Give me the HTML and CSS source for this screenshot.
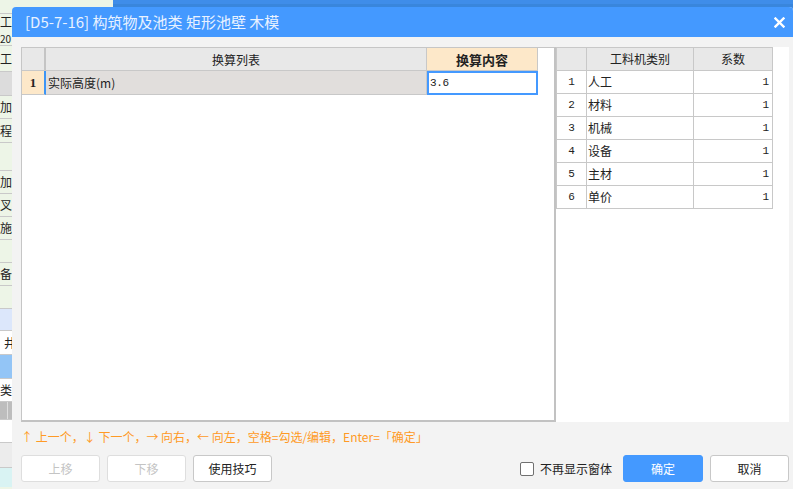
FILE: index.html
```html
<!DOCTYPE html>
<html lang="zh">
<head>
<meta charset="utf-8">
<link rel="stylesheet" href="styles.css">
</head>
<body>
<div class="desk">
  <div class="side">
    <div class="srow h14"></div>
    <div class="srow h34 two"><span>工</span><span class="small">20</span></div>
    <div class="srow h26"><span>工</span></div>
    <div class="srow h24 gray"></div>
    <div class="srow h23"><span>加</span></div>
    <div class="srow h24"><span>程</span></div>
    <div class="srow h28"></div>
    <div class="srow h23"><span>加</span></div>
    <div class="srow h23"><span>叉</span></div>
    <div class="srow h23"><span>施</span></div>
    <div class="srow h23"></div>
    <div class="srow h23"><span>备</span></div>
    <div class="srow h23"></div>
    <div class="srow h22 lblue"></div>
    <div class="srow h24 white"><span class="ind">井</span></div>
    <div class="srow h24 mblue"></div>
    <div class="srow h23 white"><span>类</span></div>
    <div class="srow h18 scroll"></div>
    <div class="srow h23 white"></div>
    <div class="srow h25 lgray"></div>
    <div class="srow h19 cyan"></div>
  </div>
  <div class="topband"></div>
</div>

<div class="dialog">
  <div class="titlebar">
    <span class="title">[D5-7-16] 构筑物及池类 矩形池壁 木模</span>
    <svg class="close" width="11" height="11" viewBox="0 0 11 11"><path d="M1.5 1.5 L9.5 9.5 M9.5 1.5 L1.5 9.5" stroke="#fff" stroke-width="2.4" stroke-linecap="square"/></svg>
  </div>
  <div class="dbody">
    <div class="panes">
      <div class="lpane">
        <div class="lrow lhead">
          <div class="c-num"></div>
          <div class="c-name">换算列表</div>
          <div class="c-val">换算内容</div>
        </div>
        <div class="lrow lsel">
          <div class="c-num">1</div>
          <div class="c-name">实际高度(m)</div>
          <div class="c-val"><span class="mono">3.6</span></div>
        </div>
      </div>
      <div class="rpane">
        <table class="rt">
          <thead>
            <tr><th class="n"></th><th class="k">工料机类别</th><th class="x">系数</th></tr>
          </thead>
          <tbody>
            <tr><td class="n">1</td><td class="k">人工</td><td class="x">1</td></tr>
            <tr><td class="n">2</td><td class="k">材料</td><td class="x">1</td></tr>
            <tr><td class="n">3</td><td class="k">机械</td><td class="x">1</td></tr>
            <tr><td class="n">4</td><td class="k">设备</td><td class="x">1</td></tr>
            <tr><td class="n">5</td><td class="k">主材</td><td class="x">1</td></tr>
            <tr><td class="n">6</td><td class="k">单价</td><td class="x">1</td></tr>
          </tbody>
        </table>
      </div>
    </div>
    <div class="hint">↑ 上一个，↓ 下一个，→ 向右，← 向左，空格=勾选/编辑，Enter=「确定」</div>
    <div class="actions">
      <div class="group">
        <button class="btn disabled">上移</button>
        <button class="btn disabled">下移</button>
        <button class="btn">使用技巧</button>
      </div>
      <div class="group right">
        <label class="check"><span class="box"></span><span class="ctext">不再显示窗体</span></label>
        <button class="btn primary">确定</button>
        <button class="btn">取消</button>
      </div>
    </div>
  </div>
</div>
</body>
</html>
```

FILE: styles.css
```css
* { box-sizing: border-box; }
html, body { margin: 0; padding: 0; }
body {
  width: 793px;
  height: 489px;
  overflow: hidden;
  position: relative;
  font-family: "Noto Sans CJK SC", "Noto Sans", sans-serif;
  font-size: 12px;
  color: #222;
}

/* background desktop */
.desk { display: flex; height: 489px; }
.side { width: 113px; background: #edf5e7; display: flex; flex-direction: column; }
.srow {
  border-bottom: 1px solid #c9c9c9;
  display: flex;
  align-items: center;
  font-size: 12px;
  line-height: 14px;
  color: #222;
  overflow: hidden;
}
.srow.two { flex-direction: column; align-items: flex-start; justify-content: flex-start; padding-top: 1px; }
.srow .small { font-size: 10px; line-height: 12px; margin-top: 4px; }
.srow .ind { margin-left: 4px; }
.h14 { height: 14px; }
.h18 { height: 18px; }
.h19 { height: 19px; border-bottom: 0; }
.h22 { height: 22px; }
.h23 { height: 23px; }
.h24 { height: 24px; }
.h25 { height: 25px; }
.h26 { height: 26px; }
.h28 { height: 28px; }
.gray { background: #dcdcdc; }
.lblue { background: #dce7fb; }
.white { background: #fff; }
.mblue { background: #93c5f6; }
.scroll { background: linear-gradient(90deg, #bdbdbd 0 7px, #dedede 7px 8px, #bdbdbd 8px); }
.lgray { background: #ececec; }
.cyan { background: #d9f3f3; }
.topband { flex: 1; background: linear-gradient(180deg, #3f8de9 0 4px, #3986dc 4px 7px, #3f8de9 7px); }

/* dialog */
.dialog {
  position: absolute;
  left: 12px;
  top: 7px;
  width: 781px;
  height: 482px;
  border-radius: 4px 4px 0 0;
  overflow: hidden;
  display: flex;
  flex-direction: column;
  background: #f3f3f3;
}
.titlebar {
  height: 30px;
  flex: none;
  background: #4499ff;
  display: flex;
  align-items: center;
  justify-content: space-between;
  padding: 0 8px 0 13px;
}
.title {
  color: #e9f2ff;
  font-size: 15px;
  line-height: 20px;
}
.close { display: block; margin-top: 1px; }

.dbody {
  flex: 1;
  padding: 10px 4px 0 9px;
  display: flex;
  flex-direction: column;
}
.panes { display: flex; height: 375px; }
.lpane {
  width: 535px;
  height: 375px;
  background: #fff;
  border: 1px solid #c6c6c6;
  border-right: 2px solid #c2c2c2;
  border-bottom: 2px solid #c2c2c2;
}
.lrow { display: flex; }
.lrow > div { border-bottom: 1px solid #c8c8c8; display: flex; align-items: center; }
.lhead > div { height: 23px; background: #e8e8e8; }
.lsel > div { height: 24px; }
.c-num { width: 24px; border-right: 2px solid #c4c4c4; justify-content: center; }
.c-name { width: 381px; border-right: 1px solid #c8c8c8; }
.c-val { width: 111px; border-right: 1px solid #c8c8c8; }
.lhead .c-name { justify-content: center; color: #222; }
.lhead .c-val { background: #fde8c9; justify-content: center; font-weight: bold; font-size: 13px; color: #222; }
.lsel .c-num {
  background: #fde8c9;
  border-right-color: #3d95f5;
  font-family: "Liberation Serif", serif;
  font-weight: bold;
  font-size: 13px;
}
.lsel .c-name { background: #e1dedc; padding-left: 2px; }
.lsel .c-val { background: #fff; border: 2px solid #4499ff; padding-left: 1px; }
.mono { font-family: "Liberation Mono", monospace; font-size: 11px; letter-spacing: -0.3px; }

.rpane { width: 233px; height: 375px; background: #fff; border-top: 0; }
.rt { border-collapse: collapse; font-size: 12px; }
.rt th, .rt td {
  border: 1px solid #c8c8c8;
  height: 23px;
  padding: 0;
  line-height: 14px;
}
.rt th { background: #e8e8e8; font-weight: normal; color: #222; }
.rt .n { width: 30px; text-align: center; }
.rt .k { width: 107px; }
.rt td.k { padding-left: 1px; }
.rt .x { width: 79px; }
.rt td.x { text-align: right; padding-right: 3px; }
.rt td.n, .rt td.x { font-family: "Liberation Mono", monospace; font-size: 11px; color: #222; }

.hint {
  margin-top: 8px;
  height: 14px;
  line-height: 14px;
  color: #ff9a25;
  font-size: 12px;
  white-space: nowrap;
}
.actions {
  margin-top: 11px;
  display: flex;
  justify-content: space-between;
  align-items: center;
}
.group { display: flex; gap: 7px; align-items: center; }
.btn {
  width: 79px;
  height: 27px;
  background: #fff;
  border: 1px solid #c8c8c8;
  border-radius: 3px;
  font-family: "Noto Sans CJK SC", sans-serif;
  font-size: 12px;
  color: #222;
  padding: 0;
}
.btn.disabled { color: #c4c4c4; border-color: #dedede; }
.btn.primary { width: 80px; background: #4499ff; border-color: #4499ff; color: #fff; }
.check { display: flex; align-items: center; margin-right: 4px; }
.box {
  width: 14px;
  height: 14px;
  border: 1px solid #707070;
  border-radius: 2px;
  background: #fff;
}
.ctext { margin-left: 6px; color: #222; font-size: 12px; line-height: 14px; }
```
